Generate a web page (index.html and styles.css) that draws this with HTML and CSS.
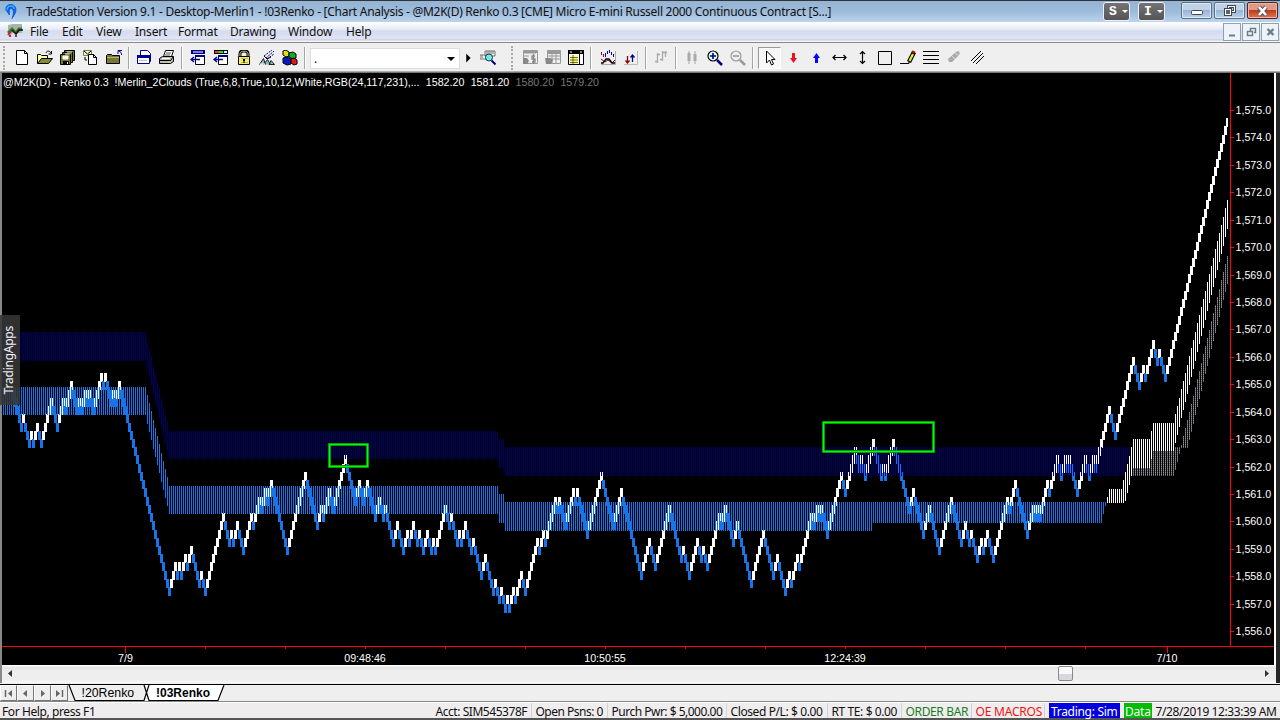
FILE: index.html
```html
<!DOCTYPE html>
<html lang="en">
<head>
<meta charset="utf-8">
<title>TradeStation Version 9.1</title>
<link rel="stylesheet" href="styles.css">
</head>
<body>
<div class="window">
  <header class="titlebar">
    <svg class="app-icon" width="14" height="18" viewBox="0 0 14 18"><path d="M3.500 9C.5 7 1.500 1.500 6.500 1.500S13 6 11 10.500L8 15.500C10 11 10 6 7.500 5.500S5 9 5.500 12z" fill="#0c5fe0" stroke="#0c5fe0"/><path d="M3 7c0-3 2-4 4-4s3 1 3 3" fill="none" stroke="#39b0ff" stroke-width="1.500"/></svg>
    <span class="title">TradeStation Version 9.1 - Desktop-Merlin1 - !03Renko - [Chart Analysis - @M2K(D) Renko 0.3 [CME] Micro E-mini Russell 2000 Continuous Contract [S...]</span>
    <div class="tags"><span class="tag">S<i></i></span><span class="tag">I<i></i></span></div>
    <div class="winbtns">
      <span class="wb"><svg width="30" height="16"><rect x="9.500" y="7.500" width="11" height="4" rx="1" fill="#fff" stroke="#445"/></svg></span>
      <span class="wb"><svg width="30" height="16"><rect x="13.500" y="3.500" width="6" height="5" fill="none" stroke="#445" stroke-width="3"/><rect x="13.500" y="3.500" width="6" height="5" fill="none" stroke="#fff"/><rect x="10.500" y="6.500" width="5" height="5" fill="#9ab" stroke="#445" stroke-width="3"/><rect x="10.500" y="6.500" width="5" height="5" fill="#567" stroke="#fff"/></svg></span>
      <span class="wb close"><svg width="30" height="16"><path d="M11 4l7 8M18 4l-7 8" stroke="#556" stroke-width="4.500"/><path d="M11 4l7 8M18 4l-7 8" stroke="#fff" stroke-width="2.600"/></svg></span>
    </div>
  </header>
  <nav class="menubar">
    <svg class="menu-icon" width="16" height="14" viewBox="0 0 16 14"><path d="M1 1l5-1h9v9H6l-2 2H1z" fill="#a9b2ac"/><path d="M1 9l4-4 4 4 3-4h3" fill="none" stroke="#1a8a2a" stroke-width="3"/><path d="M1 11l4-5M9 9l3-3" fill="none" stroke="#d01c1c" stroke-width="2"/><path d="M5 6l4 4 3-4h4" fill="none" stroke="#112" stroke-width="1.300"/><path d="M2 12h2M8 12h2" stroke="#c22" stroke-width="2"/></svg>
    <span>File</span><span>Edit</span><span>View</span><span>Insert</span><span>Format</span><span>Drawing</span><span>Window</span><span>Help</span>
    <div class="mdi">
      <b><svg width="17" height="16"><path d="M5 11.500h6" stroke="#6f7f88" stroke-width="2"/></svg></b>
      <b><svg width="17" height="16"><path d="M7.500 7V4.500h5v4H11M7 4.500h6" fill="none" stroke="#6f7f88" stroke-width="1.500"/><rect x="4.500" y="7.500" width="5" height="4" fill="none" stroke="#6f7f88" stroke-width="1.500"/></svg></b>
      <b><svg width="17" height="16"><path d="M5.500 5l6 6M11.500 5l-6 6" stroke="#6f7f88" stroke-width="2.400"/></svg></b>
    </div>
  </nav>
  <div class="toolbar">
    <i class="grip"></i>
    <span class="tb"><svg viewBox="0 0 16 16"><path d="M2.500.5h8l3 3v11h-11zM10.500.5v3h3" fill="#fff" stroke="#000"/></svg></span>
    <span class="tb"><svg viewBox="0 0 16 16"><path d="M.5 13.500v-9h3l1 1h6v3" fill="#ffffb0" stroke="#000"/><path d="M.5 13.500l4-5h11l-4 5z" fill="#8a8a30" stroke="#000"/><path d="M9 3c1-3 4-2 5 0M14.500 1v3h-3" fill="none" stroke="#000"/></svg></span>
    <span class="tb"><svg viewBox="0 0 16 16"><g fill="#777722" stroke="#000"><path d="M4.500.5h10v10h-10z"/><path d="M2.500 2.500h10v10h-10z"/><path d="M.5 4.500h10v10H.5z"/></g><path d="M7 2h5M5 4h5M3 6h5v3H3z" stroke="#fff" fill="#fff"/><path d="M3 11h6v3H3z"/><path d="M7 12h1v2H7z" fill="#fff"/></svg></span>
    <span class="tb"><svg viewBox="0 0 16 16"><path d="M.5.500h8v5h-8z" fill="#ffffa0" stroke="#777"/><path d="M1 1l3.500 3L8 1" fill="none" stroke="#000"/><path d="M5.500 14.500v-10h5l3 3v7z" fill="#fff" stroke="#000"/><path d="M10.500 4v3.500H14M2 7v3h2" fill="none" stroke="#000"/></svg></span>
    <span class="tb"><svg viewBox="0 0 16 16"><path d="M.5 13.500v-8l1-1h4l1 1h7v8z" fill="#77773a" stroke="#000"/><path d="M1 7.500h12" stroke="#bbb850"/><path d="M15.500 5c0-3-1-3-3-4M12 4V.5h4" fill="none" stroke="#000088"/></svg></span>
    <i class="sep"></i>
    <span class="tb"><svg viewBox="0 0 16 16"><path d="M4.500.5h7l3 3v8h-10z" fill="#fff" stroke="#000088"/><path d="M1.500 5.500h12v8h-12z" fill="#fff" stroke="#000088"/><path d="M1 5h13v3H1z" fill="#000099"/><path d="M3 10.500h8" stroke="#bbb"/></svg></span>
    <span class="tb"><svg viewBox="0 0 16 16"><path d="M4.500 6.500l2-6h8l-2 6z" fill="#fff" stroke="#000"/><path d="M7 3h5M6 5h5" stroke="#555"/><path d="M.5 13.500v-5l3-2h11v5l-3 2z" fill="#bbb" stroke="#000"/><path d="M1 10.500h11M12 10l2-3" stroke="#000"/><path d="M3 8.500h8" stroke="#fff"/><path d="M9 12h2" stroke="#ee0"/></svg></span>
    <i class="sep s8"></i>
    <span class="tb"><svg viewBox="0 0 16 16"><path d="M1 0h14v4H1z" fill="#000088"/><path d="M3 2h10" stroke="#fff"/><path d="M5.500 5.500h9v9h-9z" fill="#fff" stroke="#000"/><path d="M5 6h10" stroke="#000088" stroke-width="2"/><path d="M10 9.500H1M4 7L1 9.500 4 12" fill="none" stroke="#000088" stroke-width="1.300"/></svg></span>
    <span class="tb"><svg viewBox="0 0 16 16"><path d="M1 0h14v4H1z"/><path d="M2 2h4" stroke="#f33" stroke-width="2"/><path d="M6 2h4" stroke="#0f0" stroke-width="2"/><path d="M11 2h3" stroke="#aff" stroke-width="2"/><path d="M5.500 5.500h9v9h-9z" fill="#fff" stroke="#000"/><path d="M5 6h10" stroke="#000088" stroke-width="2"/><path d="M10 9.500H1M4 7L1 9.500 4 12" fill="none" stroke="#000088" stroke-width="1.300"/></svg></span>
    <span class="tb"><svg viewBox="0 0 16 16"><path d="M4 7V3.500C4 0 12 0 12 3.500V7" fill="none" stroke="#000" stroke-width="3"/><path d="M4 7V3.500C4 .5 12 .5 12 3.500V7" fill="none" stroke="#cc8"/><path d="M2.500 6.500h11v8h-11z" fill="#f3ef6a" stroke="#000"/><path d="M5 8h7v1H5zM5 12h7v1H5z" fill="#b8b860"/><path d="M7 9h2v2H7zM7.500 11h1v2h-1z"/></svg></span>
    <span class="tb"><svg viewBox="0 0 16 16"><path d="M5 6l8-6M7 8l8-7M8 9l7-5" stroke="#000088" stroke-dasharray="2 1"/><path d="M5 6l3 3 4-2" fill="none" stroke="#000"/><path d="M.5 14.500l4-6 2 6M4.500 14.500l4-5 3 5M10 14.500l2-4 3.500 4z" fill="#8bb" stroke="#222"/><path d="M1 14h5" stroke="#fff"/></svg></span>
    <span class="tb"><svg viewBox="0 0 16 16"><path d="M1 1l3-1 3 2v4L4 7 1 5z" fill="#dede20" stroke="#000"/><path d="M7 3l4-1 3 2v4l-3 1-4-2z" fill="#10b020" stroke="#000"/><path d="M1 8l4-1 4 2v5l-4 1-4-2z" fill="#0818c0" stroke="#000"/><path d="M9 9l3-1 3 2v4l-3 1-3-2z" fill="#e01818" stroke="#000"/></svg></span>
    <i class="sep s9"></i>
    <div class="combo"><span>.</span><svg width="8" height="5"><path d="M0 0h8L4 4z"/></svg></div>
    <span class="tb play"><svg viewBox="0 0 16 16"><path d="M6 3v10l5-5z"/></svg></span>
    <span class="tb"><svg viewBox="0 0 16 16"><path d="M0 5h7v4H0zM5 1h10v5H5z" fill="#eee" stroke="#777"/><path d="M2 5v3M7 1v3M9 1v3M11 1v3M13 1v3" stroke="#777"/><circle cx="9" cy="7.500" r="3.500" fill="#6ee" stroke="#333"/><path d="M11.500 10.500l4 4" stroke="#000088" stroke-width="2"/></svg></span>
    <i class="grip g2"></i>
    <span class="tb"><svg viewBox="0 0 16 16"><path d="M1.500.5h14v13h-14zM1 3h13M2 6h5M2 9h3" fill="none" stroke="#999"/><path d="M1 1h14v2H1z" fill="#999"/><path d="M1 8h4l2 3-2 3H1z" fill="#888"/><path d="M13 6h-3v3h3v3h-3M11.500 4v10" fill="none" stroke="#888" stroke-width="1.300"/></svg></span>
    <span class="tb"><svg viewBox="0 0 16 16"><path d="M2.500.5h13v13h-13zM3 6h12M3 9h12M7 3v10M11 3v10" fill="none" stroke="#999"/><path d="M2 1h13v3H2z" fill="#999"/><path d="M0 8h5l3 2-2 4H1z" fill="#888"/></svg></span>
    <span class="tb"><svg viewBox="0 0 16 16"><path d="M.5.5h15v14H.5z" fill="#fff" stroke="#000"/><path d="M0 0h16v4H0z"/><path d="M2 2h2M12 2h2" stroke="#fff"/><path d="M2 5h8v9H2z" fill="#ff8"/><path d="M2 7.500h8M2 10h8M2 12.500h8M5 5v9" stroke="#442" stroke-width=".8"/><path d="M11.500 4v11" stroke="#000"/></svg></span>
    <i class="sep s9"></i>
    <span class="tb"><svg viewBox="0 0 16 16"><path d="M1 14.500h14.500V1" fill="none" stroke="#aaa"/><path d="M1.500 2v3M3.500 4v3" stroke="#900"/><path d="M5.500 3v4M7.500 1v3M9.500 0v3M11.500 2v3M13.500 4v3" stroke="#00c"/><path d="M1 9l4 3 3-2 4 3 3-3" fill="none" stroke="#700"/><path d="M1 13h2l3-4h3l3 4h3" fill="none" stroke="#000" stroke-width="1.300"/></svg></span>
    <span class="tb"><svg viewBox="0 0 16 16"><path d="M1 14.500h13.500V1" fill="none" stroke="#bbb"/><path d="M4.500 6v7M2.500 10.500l2 2.500 2-2.500" fill="none" stroke="#900" stroke-width="1.300"/><path d="M9.500 12V5M7.500 7.500l2-2.500 2 2.500" fill="none" stroke="#000088" stroke-width="1.300"/></svg></span>
    <i class="sep"></i>
    <span class="tb"><svg viewBox="0 0 16 16"><path d="M4.500 3v10M2 11.500h2.500M4.500 4.500H7M9.500 1v10M7 9.500h2.500M12.500 1v6M10 2.500h4" stroke="#aaa" stroke-width="1.300"/></svg></span>
    <i class="sep s8"></i>
    <span class="tb"><svg viewBox="0 0 16 16"><path d="M5 1v13M11 1v13" stroke="#aaa"/><path d="M3.500 3h3v8h-3zM9.500 4h3v7h-3z" fill="#aaa"/></svg></span>
    <span class="tb"><svg viewBox="0 0 16 16"><circle cx="6" cy="6" r="5" fill="#dff" stroke="#000" stroke-width="1.200"/><path d="M3 6h6M6 3v6" stroke="#000088" stroke-width="1.600"/><path d="M10 10l5 5" stroke="#000088" stroke-width="2.500"/></svg></span>
    <span class="tb"><svg viewBox="0 0 16 16"><circle cx="6" cy="6" r="5" fill="#eee" stroke="#999" stroke-width="1.200"/><path d="M3 6h6" stroke="#999" stroke-width="1.600"/><path d="M10 10l5 5" stroke="#999" stroke-width="2.500"/></svg></span>
    <i class="sep s9"></i>
    <span class="tb on"><svg viewBox="0 0 16 16"><path d="M4.500 1v12l3-3 2 5 2-1-2-4.500h3.500z" fill="#fff" stroke="#000"/></svg></span>
    <span class="tb"><svg viewBox="0 0 16 16"><path d="M7 3h3v5h2L8.500 13 5 8h2z" fill="#f01020"/></svg></span>
    <span class="tb"><svg viewBox="0 0 16 16"><path d="M7 13h3V8h2L8.500 3 5 8h2z" fill="#0808f8"/></svg></span>
    <span class="tb"><svg viewBox="0 0 16 16"><path d="M2 7.500h13M4.500 5L2 7.500 4.500 10M12.500 5L15 7.500 12.500 10" fill="none" stroke="#000" stroke-width="1.200"/></svg></span>
    <span class="tb"><svg viewBox="0 0 16 16"><path d="M8.500 1v13M6 4l2.500-2.500L11 4M6 11l2.500 2.500L11 11" fill="none" stroke="#000" stroke-width="1.200"/></svg></span>
    <span class="tb"><svg viewBox="0 0 16 16"><path d="M1.500 1.500h13v13h-13z" fill="none" stroke="#000"/></svg></span>
    <span class="tb"><svg viewBox="0 0 16 16"><path d="M0 13.500h8.500l6-10" fill="none" stroke="#000" stroke-width="1.200"/><path d="M9 12l5-10" stroke="#000" stroke-width="4.500"/><path d="M9.500 11l3.500-7" stroke="#e8e030" stroke-width="2.300"/><path d="M13 3l1-2" stroke="#a11" stroke-width="3"/></svg></span>
    <span class="tb"><svg viewBox="0 0 16 16"><path d="M0 1.500h16M0 5.500h16M0 9.500h16M0 13.500h16" stroke="#000"/></svg></span>
    <span class="tb"><svg viewBox="0 0 16 16"><path d="M2 9l8-7c2-2 5 0 3 3L6 12H3z" fill="#aaa"/><path d="M9 3l4 3M6 6l3 3" stroke="#ddd"/></svg></span>
    <span class="tb"><svg viewBox="0 0 16 16"><path d="M2 11L12 1M4 13L14 3M7 14l8-8" stroke="#000"/></svg></span>
  </div>
  <main class="chart-wrap">
    <svg id="chart" class="chart" width="1272" height="592" viewBox="2 73 1272 592" shape-rendering="crispEdges">
      <defs><pattern id="dots" width="2" height="2" patternUnits="userSpaceOnUse"><rect width="2" height="2" fill="#606066"/><rect width="2" height="1" fill="#8c8c90"/></pattern></defs>
      <g id="bricks"></g>
      <path id="outer" fill="#00006c"/><path id="inner" fill="#1874e7"/><path id="grey" fill="url(#dots)"/><path id="white" fill="#fff"/>
      <g fill="none" shape-rendering="auto"><path d="M329.500 444.500h38v22h-38zM823.500 422.500h110v29h-110z" stroke="#007c00" stroke-width="3"/><path d="M329.500 444.500h38v22h-38zM823.500 422.500h110v29h-110z" stroke="#00ff00" stroke-width="1.500"/></g>
      <path id="axes" fill="#ff0018"/>
      <g id="labels" class="labels"></g>
    </svg>
    <div class="legend"><span>@M2K(D) - Renko 0.3&nbsp; !Merlin_2Clouds (True,6,8,True,10,12,White,RGB(24,117,231),...</span><span>1582.20</span><span>1581.20</span><span class="dim">1580.20</span><span class="dim">1579.20</span></div>
    <div class="apps"><span>TradingApps</span></div>
  </main>
  <div class="scroll"><svg width="4" height="7"><path d="M4 0v7L0 3.500z" fill="#333"/></svg><i class="thumb"></i><svg width="4" height="7"><path d="M0 0v7l4-3.500z" fill="#333"/></svg></div>
  <div class="tabs">
    <div class="nav">
      <b><svg width="9" height="9"><path d="M1.500 1v7" stroke="#666" stroke-width="1.500"/><path d="M8 1v7L4 4.500z" fill="#666"/></svg></b>
      <b><svg width="9" height="9"><path d="M6 1v7L2 4.500z" fill="#666"/></svg></b>
      <b><svg width="9" height="9"><path d="M3 1v7l4-3.500z" fill="#666"/></svg></b>
      <b><svg width="9" height="9"><path d="M7.500 1v7" stroke="#666" stroke-width="1.500"/><path d="M1 1v7l4-3.500z" fill="#666"/></svg></b>
    </div>
    <svg class="tabset" width="160" height="17" viewBox="0 0 160 17"><path d="M77 0h79l-6 16H82z" fill="#fff"/><path d="M1 0l6 15.500h69L81 0M76 0l5 15.500h69L156 0" fill="none" stroke="#000" stroke-width="1.200"/><text x="13.500" y="12" class="tab">!20Renko</text><text x="88" y="12" class="tab bold">!03Renko</text></svg>
  </div>
  <footer class="status">
    <span class="help">For Help, press F1</span><span class="a1">Acct: SIM545378F</span><span class="a2">Open Psns: 0</span><span class="a3">Purch Pwr: $ 5,000.00</span><span class="a4">Closed P/L: $ 0.00</span><span class="a5">RT TE: $ 0.00</span><span class="a6">ORDER BAR</span><span class="a7">OE MACROS</span><span class="a8">Trading: Sim</span><span class="a9">Data</span><span class="a10">7/28/2019 12:33:39 AM</span>
  </footer>
</div>
<script src="chart.js"></script>
</body>
</html>
```
FILE: styles.css
```css
* { box-sizing: border-box; }
body { margin: 0; background: #efefef; font-family: "Noto Sans", "Open Sans", sans-serif; font-size: 12px; color: #111; overflow: hidden; }
.window { width: 1280px; height: 720px; display: flex; flex-direction: column; background: #efefef; }
.titlebar { height: 22px; flex: none; border-top: 1px solid #303438; background: linear-gradient(#95b3d3, #9dbbdb 50%, #bcd4ed); display: flex; align-items: center; padding: 0 1px 0 4px; }
.app-icon { flex: none; }
.title { margin-left: 8px; white-space: pre; width: 1077px; line-height: 20px; letter-spacing: -.275px; }
.tags { display: flex; gap: 8px; }
.tag { width: 27px; height: 19px; border: 1px solid #eef; border-radius: 3px; background: linear-gradient(#747474, #555); color: #fff; font: bold 13px/16px "Liberation Mono", monospace; padding-left: 5px; display: flex; align-items: center; gap: 5px; }
.tag i { border: 3px solid transparent; border-top-color: #fff; border-bottom: 0; }
.winbtns { display: flex; gap: 2px; margin-left: 16px; align-self: flex-start; padding-top: 1px; }
.wb { width: 31px; height: 17px; border: 1px solid #5a7188; border-radius: 2px; background: linear-gradient(#bfd2e8 45%, #9ab4d2 50%, #bbd3eb); box-shadow: inset 0 0 0 1px #dbe7f4; }
.wb svg, .mdi svg { display: block; }
.close { background: linear-gradient(#df9a86 45%, #c33a1c 50%, #d87a50); border-color: #5a2020; box-shadow: inset 0 0 0 1px #e8b8a8; }
.menubar { height: 21px; flex: none; background: linear-gradient(#fff, #e8ecf6 35%, #d5dcee 45%, #dfe4f4 85%, #c0c8d8 90%, #f8f8f8 95%); border-bottom: 1px solid #888; display: grid; grid-template-columns: 23px 32px 34px 39px 43px 52px 58px 58px 1fr auto; padding-left: 7px; line-height: 20px; letter-spacing: -.2px; }
.menu-icon { margin-top: 2px; }
.mdi { display: flex; gap: 1px; padding: 1px 1px 0 0; }
.mdi b { width: 18px; height: 18px; border: 1px solid #8ca3ae; background: #edf3f9; }
.toolbar { height: 29px; flex: none; display: flex; align-items: center; padding: 2px 0 0 3px; border-bottom: 1px solid #aaa; background: #efefef; }
.grip { width: 3px; height: 24px; margin-right: 4px; border-left: 2px dotted #a9a9a9; flex: none; }
.g2 { margin: 0 4px 0 12px; }
.tb { width: 23px; height: 22px; flex: none; display: flex; align-items: center; justify-content: center; }
.tb svg { width: 16px; height: 16px; margin-left: 1px; }
.play { width: 15px; margin-right: 1px; }
.on { background: #f8f8f8; border: 1px solid #999; border-right-color: #fff; border-bottom-color: #fff; }
.sep { width: 7px; height: 22px; flex: none; background: linear-gradient(90deg, transparent 3px, #a5a5a5 3px 4px, #fff 4px 5px, transparent 5px); }
.s8 { width: 8px; }
.s9 { width: 9px; }
.combo { width: 150px; height: 21px; flex: none; background: #fff; border: 1px solid #ddd; display: flex; justify-content: space-between; align-items: center; padding: 0 4px 0 3px; }
.combo svg { margin-top: 2px; }
.chart-wrap { height: 593px; flex: none; display: flex; position: relative; border-left: 2px solid #888; border-top: 1px solid #777; background: linear-gradient(90deg, #000 1272px, #fff 1272px 1274px, #262626 1274px); }
.chart { display: block; background: #000; flex: none; }
.labels text, .legend { font-family: "Liberation Sans", sans-serif; font-size: 10.7px; fill: #fff; color: #fff; }
.legend { position: absolute; left: 1px; top: 3px; display: flex; gap: 6.300px; line-height: 13px; white-space: pre; letter-spacing: -.01px; }
.dim { color: #777; }
.apps { position: absolute; left: -2px; top: 242px; width: 20px; height: 90px; background: rgba(55,55,55,.88); display: flex; align-items: center; justify-content: center; color: #f2f2f2; }
.apps span { writing-mode: vertical-rl; transform: rotate(180deg); line-height: 14px; letter-spacing: -.25px; margin: 1px 2px 0 0; }
.scroll { height: 18px; width: 1276px; flex: none; background: linear-gradient(#fff 1px, #e4e4e4 2px, #eee 6px, #eee 14px, #f8f8f8); border-left: 2px solid #888; display: flex; align-items: center; justify-content: space-between; padding: 0 7px 2px 6px; box-shadow: 4px 0 #262626; }
.thumb { width: 15px; height: 15px; border: 1px solid #888; border-radius: 2px; background: linear-gradient(#f8f8f8 50%, #d5d8dc 50%); margin-left: 1046px; margin-right: auto; }
.tabs { height: 18px; margin-top: 1px; flex: none; border-top: 1px solid #000; border-bottom: 1px solid #888; display: flex; }
.nav { display: flex; width: 68px; }
.nav b { width: 17px; height: 16px; background: #eee; border: 1px solid #fff; border-right-color: #777; border-bottom-color: #777; display: flex; align-items: center; justify-content: center; }
.tab { font: 12.300px "Liberation Sans", sans-serif; }
.bold { font-weight: bold; font-size: 12px; }
.status { height: 18px; flex: none; border-top: 1px solid #fff; border-bottom: 2px solid #555; background: #f0edee; display: flex; padding-left: 2px; line-height: 17px; white-space: pre; letter-spacing: -.4px; }
.status span { flex: none; height: 15px; line-height: 17px; }
.a1, .a2, .a3, .a4, .a5, .a6, .a7 { background: linear-gradient(90deg, transparent calc(100% - 5px), #d4d2d4 calc(100% - 5px) calc(100% - 4px), transparent calc(100% - 4px)); }
.help { width: 433.500px; }
.a1 { width: 100px; letter-spacing: -.45px; }
.status .a2 { width: 76px; letter-spacing: -.5px; }
.status .a3 { width: 119px; letter-spacing: -.5px; }
.a4 { width: 101px; }
.a5 { width: 74px; }
.a6 { width: 70px; color: #1c7c26; letter-spacing: -.35px; }
.a7 { width: 73px; color: #f01414; letter-spacing: -.2px; }
.a8 { width: 71px; background: #0000e0; color: #fff; padding-left: 2.500px; letter-spacing: -.3px; }
.a9 { width: 28px; background: #00bc00; color: #fff; margin-left: 4px; padding-left: 1.500px; letter-spacing: -.2px; }
.a10 { margin-left: 4px; }
```
FILE: chart.js
```js
const NS = "http://www.w3.org/2000/svg";
const STEP = 8.229;
const byId = (id) => document.getElementById(id);
const add = (parent, name, attrs, text) => {
  const el = document.createElementNS(NS, name);
  for (const k in attrs) el.setAttribute(k, attrs[k]);
  if (text) el.textContent = text;
  parent.appendChild(el);
};

// Columns at which the brick direction reverses; the first run goes down.
const turns = [10,11,14,15,16,18,20,25,28,31,32,35,38,39,40,42,43,44,46,50,51,52,55,56,57,59,84,87,88,89,90,92,93,95,99,100,102,111,114,115,116,118,121,
125,126,129,130,132,133,135,143,152,158,160,161,164,166,172,177,179,181,183,187,189,191,192,196,198,201,203,204,206,208,209,211,213,215,216,217,222,224,225,228,229,230,232,235,
236,240,242,246,247,249,250,252,253,254,256,257,260,262,268,269,271,272,277,278,279,282,286,287,288,293,300,306,310,320,324,327,334,340,341,344,348,350,351,353,359,360,362,366,
368,375,381,386,388,392,394,395,398,399,405,406,408,409,410,413,420,422,427,429,430,432,436,440,441,442,446,454,456,461,464,469,475,480,482,484,485,488,490,491,493,496,
503,504,507,513,516,517,518,519,523,524,528,530,532,533,534,538,542,544,546,547,554,557,566,569,571,572,576,578,579,582,613];
let col = 6, level = 33, dir = 1;
const brick = () => add(byId("bricks"), "rect", {
  x: col * 2, y: Math.round(118.1 + STEP * level), width: col === 613 ? 2 : 3, height: 9, fill: dir > 0 ? "#1874e7" : "#fff"
});
brick();
for (const end of turns) {
  while (col < end) { col++; level += dir; brick(); }
  dir = -dir;
}

// Each cloud is a comb of one-pixel lines, one per column.
const comb = { outer: "", inner: "", grey: "", white: "" };
const lines = (id, x0, x1, top, bottom, slope = 0) => {
  for (let x = x0, i = 0; x <= x1; x += 2, i++) {
    const a = Math.round(top + slope * i), b = Math.round(bottom + slope * i);
    comb[id] += `M${x} ${a}h1V${b}h-1z`;
  }
};
lines("inner", 3, 145, 387, 415);
lines("inner", 147, 167, 395, 424, STEP);
lines("inner", 169, 497, 486, 514);
lines("inner", 499, 503, 494, 523);
lines("inner", 505, 871, 502, 531);
lines("inner", 873, 1101, 502, 523);
lines("inner", 1103, 1103, 502, 514);
lines("inner", 1105, 1105, 502, 506);
lines("outer", 3, 145, 332, 361);
lines("outer", 147, 167, 340, 369, STEP);
lines("outer", 169, 497, 431, 459);
lines("outer", 499, 503, 439, 468);
lines("outer", 505, 1131, 447, 476);
lines("white", 1107, 1107, 497, 503);
lines("white", 1109, 1121, 489, 503);
lines("white", 1123, 1123, 480, 503);
lines("white", 1125, 1131, 472, 501, -STEP);
lines("white", 1133, 1149, 439, 468);
lines("white", 1151, 1151, 431, 459);
lines("white", 1153, 1173, 423, 451);
lines("white", 1175, 1227, 414, 443, -STEP);
lines("grey", 1133, 1149, 468, 476);
lines("grey", 1151, 1151, 459, 476);
lines("grey", 1153, 1173, 451, 476);
lines("grey", 1175, 1175, 447, 470);
lines("grey", 1177, 1177, 447, 462);
lines("grey", 1179, 1179, 447, 454);
lines("grey", 1181, 1181, 445, 448);
lines("grey", 1183, 1183, 436, 448);
lines("grey", 1185, 1185, 428, 448);
lines("grey", 1187, 1187, 420, 448);
lines("grey", 1189, 1227, 412, 440, -STEP);
for (const id in comb) byId(id).setAttribute("d", comb[id]);

let axes = "M1230 73h1v573h-1zM2 646h1272v1H2z";
for (let p = 1575; p >= 1556; p--) {
  const y = Math.round(110 + (1575 - p) * 27.43);
  axes += `M1231 ${y}h3v1h-3z`;
  add(byId("labels"), "text", { x: 1235.5, y: y + 4 }, `1,${p - 1000}.0`);
}
for (const x of [205,285,365,445,525,605,685,765,845,925,1005,1085]) axes += `M${x} 647h1v2h-1z`;
for (const x of [125,1167]) axes += `M${x} 647h1v6h-1z`;
byId("axes").setAttribute("d", axes);
for (const [x, t] of [[125.5,"7/9"],[365,"09:48:46"],[605,"10:50:55"],[845,"12:24:39"],[1167,"7/10"]])
  add(byId("labels"), "text", { x, y: 662, "text-anchor": "middle" }, t);
```
